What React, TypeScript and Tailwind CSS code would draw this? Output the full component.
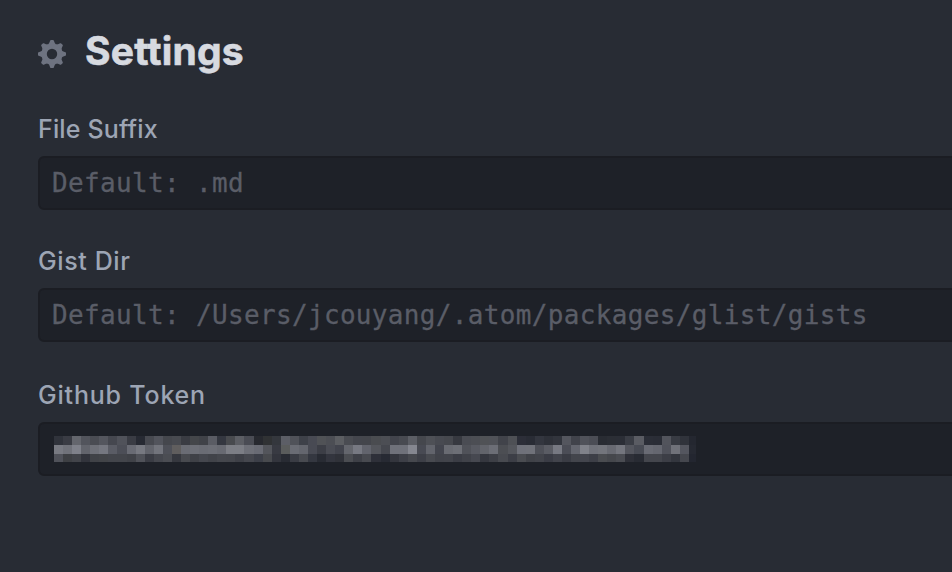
const top = '30333b 3a3c44 64666d 52545c 4a4c53 54565e 45474f 50525a 3a3c44 272a33 474950 52545c 45474d 484a50 3a3c43 44464a 404248 5a5c64 343740 484a4e 5c5e64 4a4c54 27292f 303234 34373d 5c5e66 505259 3e4149 484a53 505256 4c4e54 5c5e62 4a4c52 44464d 44464c 4a4c50 4c4e54 42444c 484a51 5c5e65 45474d 4e5056 484a51 46484e 373940 4a4c53 4c4e54 505256 505258 41434a 4e5055 2c2e38 292c35 33363f 2e3139 32353d 54565e 41434b 50525a 4b4d55 292c33 2b2e35 2b2e36 3a3d45 5a5c63 2b2e37 2a2d36 52545c 383b43 30333b 242730';
const middle = '787a82 70727a 7f818a 62646c 6e7078 757780 5a5c65 4c4e57 696b74 777981 62646c 72747c 4e5058 605e5e 6a6c74 6d6f77 6a6c74 6c6e76 686a72 7c7e85 7c7e85 6e7078 696b74 53555b 383a42 5a5c5c 6a6c74 64666e 484a53 3c3e46 4a4c54 42444d 64666d 777982 62646d 54565c 45474e 6f717a 6f717a 858790 484a53 62646c 43454e 696b72 6d6f76 505259 585a62 62646b 6c6e76 4c4e53 54565c 6f717a 70727a 4e5058 5a5c64 777982 4b4d56 64666f 80828a 70727a 73757c 686a72 74767e 54565e 484b54 696b74 656770 50525b 70727a 54565f 262932';
const bottom = '50525a 3e4044 42444a 32343c 404247 424448 43454b 43454b 404248 505259 3a3c44 45474e 4b4d53 36383f 484a4f 3f4147 45474e 414349 45474d 44464c 3e4047 45474e 3c3f48 484a4e 33353d 282b33 3a3c44 484a50 343740 282b33 33353e 303239 4b4d52 3e4047 484a50 2e3039 272a33 33353d 3d3f47 46484e 3d3f47 484a50 41434a 42444b 3b3d45 404249 464850 35373f 3d3f46 484a50 3c3e46 4a4c51 404248 42444b 3a3c45 42444c 3a3c44 43454c 43454d 3d3f47 4a4c50 45474c 4a4c52 2e3038 282b33 44464d 44464d 3c3e46 33363e 45474e 232630';
const mosaic = [top, middle, bottom].map((row) => row.split(' '));

// Pixelated token value: one rect per mosaic block.
function CensoredToken() {
  return (
    <svg width="642" height="26" viewBox="0 0 642 26" shapeRendering="crispEdges">
      {mosaic.map((row, y) =>
        row.map((color, x) => (
          <rect key={`${x}-${y}`} x={Math.round(x * 9.07)} y={y * 9} width={10} height={9} fill={`#${color}`} />
        )),
      )}
    </svg>
  );
}

function GearIcon() {
  return (
    <svg className="mt-[5px] shrink-0" width="28" height="28" viewBox="-14 -14 28 28" fill="#6e7380">
      <path
        fillRule="evenodd"
        d="M0 -10.6A10.6 10.6 0 1 1 0 10.6A10.6 10.6 0 1 1 0 -10.6ZM0 -5.2A5.2 5.2 0 1 0 0 5.2A5.2 5.2 0 1 0 0 -5.2Z"
      />
      {[0, 45, 90, 135, 180, 225, 270, 315].map((angle) => (
        <path key={angle} transform={`rotate(${angle})`} d="M-4 -9.4Q-2.8 -10 -1.8 -13.4Q-1.6 -14 -1 -14H1Q1.6 -14 1.8 -13.4Q2.8 -10 4 -9.4Z" />
      ))}
    </svg>
  );
}

function Field({ label, tracking, placeholder }: { label: string; tracking: string; placeholder?: string }) {
  return (
    <div>
      <div className={`h-[34px] text-[25px] font-[450] leading-[34px] text-[#9da5b4] ${tracking}`}>{label}</div>
      <div className="mt-[10px] flex h-[54px] w-[960px] items-center rounded-md border-2 border-[#1b1d23] bg-[#1e2128] px-3">
        {placeholder ? (
          <span className="whitespace-pre font-['DejaVu_Sans_Mono',monospace] text-[26px] leading-[30px] tracking-[0.34px] text-[#5a5d67] [-webkit-text-stroke:0.3px_#5a5d67]">
            {placeholder}
          </span>
        ) : (
          <div className="ml-0.5">
            <CensoredToken />
          </div>
        )}
      </div>
    </div>
  );
}

export default function App() {
  return (
    <main className="h-[572px] w-[952px] overflow-hidden bg-[#282c34] pl-[38px] pt-[26px] font-['Inter',sans-serif]">
      <header className="flex h-[50px] items-center gap-[19px]">
        <GearIcon />
        <h1 className="pb-px text-[39px] font-bold leading-[49px] tracking-[0.2px] text-[#d7dae0] [-webkit-text-stroke:0.6px_#d7dae0]">
          Settings
        </h1>
      </header>
      <div className="mt-9 flex flex-col">
        <Field label="File Suffix" tracking="tracking-[0.15px]" placeholder="Default: .md" />
        <div className="mt-[34px]">
          <Field
            label="Gist Dir"
            tracking="tracking-[0.6px]"
            placeholder="Default: /Users/jcouyang/.atom/packages/glist/gists"
          />
        </div>
        <div className="mt-9">
          <Field label="Github Token" tracking="tracking-[0.8px]" />
        </div>
      </div>
    </main>
  );
}
